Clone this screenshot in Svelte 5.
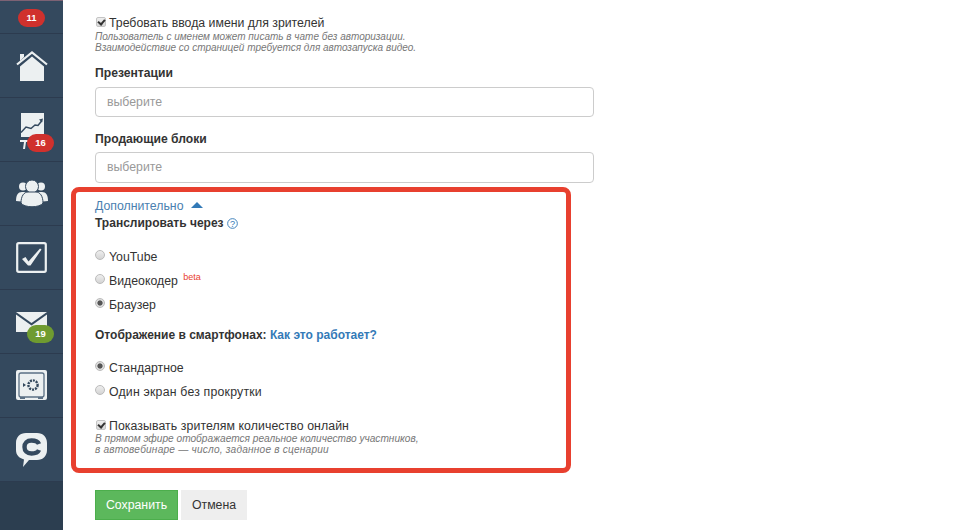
<script>
  const nav = [
    { id: 'home' },
    { id: 'chart', badge: '16', color: 'red', top: 36 },
    { id: 'users' },
    { id: 'tasks' },
    { id: 'mail', badge: '19', color: 'green', top: 35 },
    { id: 'safe' },
    { id: 'chat' }
  ];
</script>

<div class="page">
  <aside class="sidebar">
    <div class="top"><span class="badge red">11</span></div>
    {#each nav as item}
      <div class="item">
        {#if item.id === 'home'}
          <svg width="32" height="30" viewBox="0 0 32 30">
            <path d="M4 3h4v3l-4 4z" fill="#ecf0f1" />
            <path d="M1 13.500 16 1.500l15 12" fill="none" stroke="#ecf0f1" stroke-width="2.200" />
            <path d="M4 15.500 16 5.500l12 10V30H4z" fill="#ecf0f1" />
          </svg>
        {:else if item.id === 'chart'}
          <svg class="chart" width="24" height="36" viewBox="0 0 24 36">
            <path d="M1 0h23v24H1z" fill="#ecf0f1" />
            <path d="M1 19.500 6 14l5 1.500 4-3.500 3 .5 4-5" fill="none" stroke="#34495e" stroke-width="1.500" />
            <path d="M19 6.500l4-1-1 4z" fill="#34495e" />
            <path d="M0 27h9v2H6l-1 7H3l1-7H0z" fill="#ecf0f1" />
          </svg>
        {:else if item.id === 'users'}
          <svg width="32" height="27" viewBox="0 0 32 27">
            <circle cx="7" cy="6.500" r="4" fill="#ecf0f1" />
            <circle cx="25" cy="6.500" r="4" fill="#ecf0f1" />
            <path d="M0 21c0-6 2-9 6-9h4v10zM32 21c0-6-2-9-6-9h-4v10z" fill="#ecf0f1" />
            <circle cx="16" cy="6.500" r="6.500" fill="#ecf0f1" stroke="#34495e" />
            <path d="M5 23c0-7 3-11 7-11h8c4 0 7 4 7 11-3 5-19 5-22 0z" fill="#ecf0f1" stroke="#34495e" />
          </svg>
        {:else if item.id === 'tasks'}
          <svg width="31" height="31" viewBox="0 0 31 31">
            <rect x="1.200" y="1.200" width="28.600" height="28.600" rx="1.500" fill="none" stroke="#ecf0f1" stroke-width="2.200" />
            <path d="M6 17l3.500-2 3 4.500L24 6.500l1.500 1-11 16h-2.500z" fill="#ecf0f1" />
          </svg>
        {:else if item.id === 'mail'}
          <svg width="31" height="20" viewBox="0 0 31 20">
            <path d="M0 0h31L15.500 11z" fill="#ecf0f1" />
            <path d="M0 2.500 15.500 13.500 31 2.500V20H0z" fill="#ecf0f1" />
          </svg>
        {:else if item.id === 'safe'}
          <svg width="31" height="31" viewBox="0 0 31 31">
            <rect width="31" height="30" rx="2" fill="#ecf0f1" />
            <rect x="3" y="3" width="25" height="24" rx="2" fill="none" stroke="#5b7085" stroke-width="1.300" />
            <circle cx="17" cy="15" r="4.600" fill="none" stroke="#34495e" stroke-width="2.400" stroke-dasharray="2 1" />
            <path d="M7 13l3 2-3 2z" fill="#34495e" />
            <path d="M4 27h5v2H4zM22 27h5v2h-5z" fill="#5b7085" />
          </svg>
        {:else}
          <svg width="31" height="34" viewBox="0 0 31 34">
            <path d="M10 0h11c6 0 10 4 10 10v7c0 6-4 10-10 10h-8l-6 7 1-7.500C3 25 0 22 0 17v-7C0 4 4 0 10 0z" fill="#ecf0f1" />
            <path d="M23 17c-1 2.500-3.500 3.500-7.500 3.500C11 20.500 8.500 18 8.500 14s2.500-6.500 7-6.500c4 0 6.500 1 7.500 3.500" fill="none" stroke="#34495e" stroke-width="4.400" />
          </svg>
        {/if}
        {#if item.badge}
          <span class="badge {item.color}" style="top:{item.top}px">{item.badge}</span>
        {/if}
      </div>
    {/each}
  </aside>

  <main>
    <label class="check">
      <input type="checkbox" checked />
      <span>Требовать ввода имени для зрителей</span>
    </label>
    <p class="hint">Пользователь с именем может писать в чате без авторизации.<br />Взаимодействие со страницей требуется для автозапуска видео.</p>

    <h4 class="field-title first">Презентации</h4>
    <div class="select">выберите</div>

    <h4 class="field-title second">Продающие блоки</h4>
    <div class="select tall">выберите</div>

    <div class="extra">
      <div class="annotation"></div>
      <div class="toggle">Дополнительно <span class="arrow"></span></div>
      <div class="group-title">
        Транслировать через
        <svg class="help" width="11" height="11" viewBox="0 0 12 12">
          <circle cx="6" cy="6" r="5.300" fill="none" stroke="#337ab7" />
          <text x="6" y="9.500" text-anchor="middle">?</text>
        </svg>
      </div>
      <div class="radios stream">
        <label class="radio"><input type="radio" name="stream" /><span>YouTube</span></label>
        <label class="radio"><input type="radio" name="stream" /><span>Видеокодер <sup>beta</sup></span></label>
        <label class="radio"><input type="radio" name="stream" checked /><span>Браузер</span></label>
      </div>
      <div class="group-title mobile">Отображение в смартфонах: <a href="#how">Как это работает?</a></div>
      <div class="radios view">
        <label class="radio"><input type="radio" name="view" checked /><span>Стандартное</span></label>
        <label class="radio"><input type="radio" name="view" /><span class="wide">Один экран без прокрутки</span></label>
      </div>
      <label class="check online">
        <input type="checkbox" checked />
        <span>Показывать зрителям количество онлайн</span>
      </label>
      <p class="hint online-hint">В прямом эфире отображается реальное количество участников,<br /><span class="wide">в автовебинаре — число, заданное в сценарии</span></p>
    </div>

    <div class="actions">
      <button class="save">Сохранить</button>
      <button class="cancel">Отмена</button>
    </div>
  </main>
</div>

<style>
  :global(body) {
    margin: 0;
    background: #fff;
    color: #333;
    font-family: "Liberation Sans", Arial, sans-serif;
    font-size: 12.300px;
    overflow: hidden;
  }
  .page {
    display: flex;
    height: 530px;
    overflow: hidden;
  }
  .sidebar {
    flex: 0 0 63px;
    background: #2c3e50;
  }
  .top {
    height: 34px;
    background: #34495e;
    border-top: 1px solid #7d6274;
    border-bottom: 1px solid #2c3b4f;
    box-sizing: border-box;
    display: flex;
    justify-content: center;
    align-items: flex-start;
    padding-top: 8px;
  }
  .item {
    position: relative;
    height: 64px;
    box-sizing: border-box;
    background: #34495e;
    border-bottom: 1px solid #2c3b4f;
    display: flex;
    align-items: center;
    justify-content: center;
  }
  .chart {
    margin-top: 2px;
  }
  .badge {
    display: block;
    color: #fff;
    font-size: 9.500px;
    font-weight: 700;
    line-height: 18px;
    height: 18px;
    width: 27px;
    text-align: center;
    border-radius: 9px;
  }
  .red { background: #d0312d; }
  .green { background: #6f9b30; }
  .item .badge {
    position: absolute;
    left: 27px;
  }
  main {
    flex: 1;
    padding: 16px 0 0 32px;
    min-width: 0;
  }
  .check {
    display: flex;
    align-items: flex-start;
    height: 15px;
    line-height: 15px;
  }
  input[type="checkbox"] {
    appearance: none;
    position: relative;
    box-sizing: border-box;
    width: 10px;
    height: 10px;
    margin: 1px 3px 0 1px;
    border: 1px solid #c4c4c4;
    border-radius: 2px;
    background: linear-gradient(#eee, #d8d8d8);
  }
  input[type="checkbox"]::after {
    content: "";
    position: absolute;
    left: 2px;
    top: 0;
    width: 3px;
    height: 5px;
    border: solid #333;
    border-width: 0 2px 2px 0;
    transform: rotate(40deg);
  }
  .hint {
    margin: 0;
    font-size: 10px;
    font-style: italic;
    line-height: 11px;
    color: #777;
  }
  .online-hint {
    margin-top: -1px;
    font-size: 10.150px;
  }
  .wide {
    letter-spacing: 0.2px;
  }
  .online span {
    letter-spacing: 0.08px;
  }
  .field-title {
    margin: 0;
    font-size: 12.150px;
    font-weight: 700;
    line-height: 15px;
    color: #333;
  }
  .first { margin-top: 13px; }
  .second { margin-top: 15px; }
  .select {
    width: 499px;
    height: 30px;
    line-height: 28px;
    margin-top: 6px;
    box-sizing: border-box;
    border: 1px solid #ccc;
    border-radius: 4px;
    padding-left: 11px;
    color: #999;
  }
  .tall {
    height: 31px;
    margin-top: 5px;
  }
  .extra {
    position: relative;
    margin-top: 15px;
    padding-top: 1px;
  }
  .annotation {
    position: absolute;
    left: -24px;
    top: -11px;
    width: 500px;
    height: 286px;
    box-sizing: border-box;
    border: 5px solid #e8402f;
    border-radius: 8px;
    pointer-events: none;
  }
  .toggle {
    color: #4a7fb0;
    line-height: 15px;
  }
  .arrow {
    display: inline-block;
    width: 0;
    height: 0;
    margin: 0 0 2px 4px;
    border: 6px solid transparent;
    border-top: 0;
    border-bottom-color: #337ab7;
  }
  .group-title {
    font-size: 12px;
    font-weight: 700;
    line-height: 15px;
    margin-top: 2px;
  }
  .group-title a {
    color: #337ab7;
    text-decoration: none;
  }
  .help {
    vertical-align: -2px;
  }
  .help text {
    font-size: 10px;
    fill: #337ab7;
    font-weight: 400;
  }
  .radios {
    display: flex;
    flex-direction: column;
    gap: 9px;
  }
  .stream { margin-top: 19px; }
  .view { margin-top: 18px; }
  .radio {
    display: flex;
    align-items: flex-start;
    height: 15px;
    line-height: 15px;
  }
  input[type="radio"] {
    appearance: none;
    box-sizing: border-box;
    width: 10px;
    height: 10px;
    margin: 0 4px 0 0;
    border: 1px solid #bbb;
    border-radius: 50%;
    background: linear-gradient(#eee, #d4d4d4);
  }
  input[type="radio"]:checked {
    background: radial-gradient(circle, #555 0 2.200px, #ddd 3px);
  }
  sup {
    font-size: 9px;
    color: #e8402f;
    line-height: 0;
    margin-left: 2px;
  }
  .mobile { margin-top: 15px; }
  .online { margin-top: 19px; }
  .actions {
    display: flex;
    gap: 3px;
    margin-top: 35px;
  }
  button {
    font: inherit;
    height: 30px;
    border: 1px solid transparent;
    cursor: pointer;
    padding: 0;
  }
  .save {
    width: 83px;
    background: #5cb85c;
    border-color: #4cae4c;
    color: #fff;
  }
  .cancel {
    width: 66px;
    background: #eee;
    border-color: #eee;
    color: #333;
  }
</style>
